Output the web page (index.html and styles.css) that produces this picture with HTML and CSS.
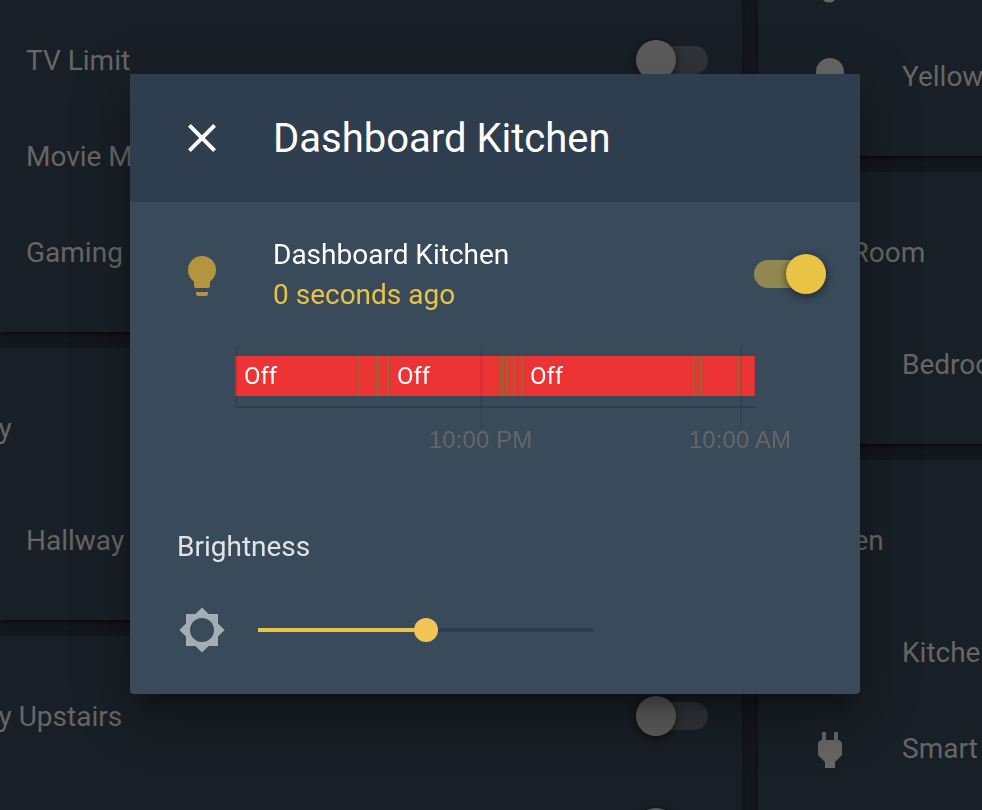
FILE: index.html
```html
<!DOCTYPE html>
<html lang="en">
<head>
<meta charset="utf-8">
<title>Dashboard Kitchen</title>
<link rel="stylesheet" href="styles.css">
</head>
<body>
<main class="board">
  <div class="column left">
    <section class="card">
      <div class="row"><span class="name">TV Limit</span><span class="switch"><i></i></span></div>
      <div class="row"><span class="name">Movie M</span></div>
      <div class="row"><span class="name">Gaming</span></div>
    </section>
    <section class="card">
      <header class="heading"><span>y</span></header>
      <div class="row"><span class="name">Hallway</span></div>
    </section>
    <section class="card">
      <header class="heading"><span>y Upstairs</span><span class="switch"><i></i></span></header>
      <div class="row"><span class="name"></span><span class="switch"><i></i></span></div>
    </section>
  </div>
  <div class="column right">
    <section class="card first">
      <svg class="peek" viewBox="0 0 14 3"><path d="M1 0H13Q11 2.5 7 2.5T1 0Z"/></svg>
      <div class="row"><svg class="icon" viewBox="0 0 24 24"><path d="M12,2A7,7 0 0,0 5,9C5,11.38 6.19,13.47 8,14.74V17A1,1 0 0,0 9,18H15A1,1 0 0,0 16,17V14.74C17.81,13.47 19,11.38 19,9A7,7 0 0,0 12,2Z"/></svg><span class="name">Yellow</span></div>
    </section>
    <section class="card">
      <header class="heading room"><span>Room</span></header>
      <div class="row"><span class="icon"></span><span class="name">Bedroom</span></div>
    </section>
    <section class="card">
      <header class="heading kitchen"><span>en</span></header>
      <div class="row"><span class="icon"></span><span class="name">Kitchen</span></div>
      <div class="row"><svg class="icon" viewBox="0 0 24 24"><path d="M16,7V3H14V7H10V3H8V7C7,7 6,8 6,9V14.5L9.5,18V21H14.5V18L18,14.5V9C18,8 17,7 16,7Z"/></svg><span class="name">Smart</span></div>
    </section>
  </div>
</main>

<div class="dialog" role="dialog">
  <header class="toolbar">
    <svg class="close" viewBox="0 0 24 24"><path d="M19,6.41L17.59,5L12,10.59L6.41,5L5,6.41L10.59,12L5,17.59L6.41,19L12,13.41L17.59,19L19,17.59L13.41,12L19,6.41Z"/></svg>
    <h1>Dashboard Kitchen</h1>
  </header>
  <div class="state">
    <svg class="bulb" viewBox="0 0 24 24"><path d="M12,2A7,7 0 0,0 5,9C5,11.38 6.19,13.47 8,14.74V17A1,1 0 0,0 9,18H15A1,1 0 0,0 16,17V14.74C17.81,13.47 19,11.38 19,9A7,7 0 0,0 12,2M9,21A1,1 0 0,0 10,22H14A1,1 0 0,0 15,21V20H9V21Z"/></svg>
    <div class="info"><div>Dashboard Kitchen</div><div class="ago">0 seconds ago</div></div>
    <span class="switch on"><i></i></span>
  </div>
  <svg class="history" viewBox="0 0 600 120">
    <rect class="off" x="5.5" y="16" width="519.3" height="40"/>
    <g class="change">
      <rect x="127.3" y="16" width="2.6" height="40"/>
      <rect x="146" y="16" width="2.6" height="40"/>
      <rect x="157.2" y="16" width="2" height="40"/>
      <rect class="soft" x="159.2" y="16" width="2" height="40"/>
      <rect x="269.4" y="16" width="4" height="40"/>
      <rect x="275.4" y="16" width="3.2" height="40"/>
      <rect x="283.2" y="16" width="2.4" height="40"/>
      <rect x="291.2" y="16" width="2.4" height="40"/>
      <rect x="463.2" y="16" width="2.2" height="40"/>
      <rect x="470" y="16" width="2.2" height="40"/>
      <rect class="soft" x="472.2" y="16" width="1.6" height="40"/>
      <rect x="508" y="16" width="2.4" height="40"/>
    </g>
    <g class="grid">
      <rect x="5.5" y="6" width="2" height="60"/>
      <rect x="250.5" y="6" width="2" height="82"/>
      <rect x="510" y="6" width="2" height="82"/>
      <rect class="axis" x="5.5" y="66" width="521" height="2"/>
    </g>
    <g class="value"><text x="14" y="44">Off</text><text x="167" y="44">Off</text><text x="300" y="44">Off</text></g>
    <g class="tick"><text x="250.7" y="108">10:00 PM</text><text x="510" y="108">10:00 AM</text></g>
  </svg>
  <div class="label">Brightness</div>
  <div class="brightness">
    <svg class="sun" viewBox="0 0 24 24"><path d="M12,18A6,6 0 0,1 6,12A6,6 0 0,1 12,6A6,6 0 0,1 18,12A6,6 0 0,1 12,18M20,15.31L23.31,12L20,8.69V4H15.31L12,0.69L8.69,4H4V8.69L0.69,12L4,15.31V20H8.69L12,23.31L15.31,20H20V15.31Z"/></svg>
    <div class="slider"><div class="filled"></div><div class="knob"></div><div class="rest"></div></div>
  </div>
</div>
</body>
</html>
```
FILE: styles.css
```css
* { box-sizing: border-box; }
body {
  margin: 0;
  width: 982px;
  height: 810px;
  overflow: hidden;
  background: #14181f;
  color: #666;
  font: 28px/40px Roboto, sans-serif;
}
svg { display: block; fill: currentColor; flex: none; }

.board {
  display: grid;
  grid-template-columns: 742px 400px;
  gap: 16px;
  height: 810px;
  overflow: hidden;
}
.column { display: flex; flex-direction: column; gap: 16px; }
.card {
  flex: none;
  padding-bottom: 32px;
  background: #181f26;
  box-shadow: 0 4px 4px rgba(0,0,0,.2), 0 2px 10px rgba(0,0,0,.15), 0 6px 2px -4px rgba(0,0,0,.3);
}
.left .card:first-child { padding-top: 12px; }
.row { display: flex; align-items: center; height: 96px; }
.name { flex: 1; padding-top: 2px; white-space: nowrap; }
.left .row { padding: 0 34px 0 26px; }
.right .row { padding-left: 48px; }
.icon { width: 48px; height: 48px; margin: 4px 48px 0 0; }
.heading {
  display: flex;
  align-items: center;
  justify-content: space-between;
  height: 144px;
  padding: 16px 34px 0 0;
}
.heading span:first-child { padding-top: 2px; text-indent: -1.5px; }
.heading.room { padding-left: 95px; }
.heading.kitchen { padding-left: 97px; }
.first { height: 156px; }
.peek { width: 14px; height: 3px; margin: 0 0 25px 64px; }

.switch {
  display: flex;
  align-items: center;
  width: 72px;
  height: 28px;
  border-radius: 14px;
  background: #303338;
}
.switch i {
  width: 40px;
  height: 40px;
  border-radius: 50%;
  background: #5c5c5c;
  box-shadow: 0 2px 8px rgba(0,0,0,.55);
}
.switch.on { justify-content: flex-end; background: #908850; }
.switch.on i { background: #e9c345; }

.dialog {
  position: fixed;
  left: 130px;
  top: 74px;
  width: 730px;
  height: 620px;
  border-radius: 0 0 4px 4px;
  background: #394a5b;
  color: #fff;
  box-shadow: 0 32px 48px 4px rgba(0,0,0,.14), 0 12px 60px 10px rgba(0,0,0,.12), 0 16px 20px -10px rgba(0,0,0,.4);
}
.toolbar {
  display: flex;
  align-items: center;
  gap: 47px;
  height: 128px;
  padding-left: 48px;
  background: #2f3e4e;
}
.close { width: 48px; height: 48px; }
h1 { margin: 0; padding-top: 2px; font-size: 40px; font-weight: 400; }
.state {
  display: flex;
  align-items: center;
  height: 80px;
  margin: 32px 34px 0 48px;
}
.bulb { width: 48px; height: 48px; margin-top: 4px; color: #b4943f; }
.info { flex: 1; margin-left: 47px; padding-top: 2px; }
.ago { color: #e9c345; }

.history { width: 600px; height: 120px; margin: 26px 0 0 100px; }
.off { fill: #ec3435; }
.change { fill: #a06030; }
.soft { opacity: .4; }
.grid { fill: rgba(0,0,0,.09); }
.axis { fill: rgba(0,0,0,.13); }
.value { fill: #fff; font-size: 24px; }
.tick { fill: #666; font: 24px "Liberation Sans", sans-serif; letter-spacing: .1px; text-anchor: middle; }

.label { margin: 67px 0 0 47px; color: #e1e4e6; }
.brightness { display: flex; align-items: center; margin: 39px 0 0 48px; }
.sun { width: 48px; height: 48px; color: #a4adb5; }
.slider { display: flex; align-items: center; width: 336px; margin-left: 32px; }
.filled { width: 156px; height: 4px; background: #e9c345; }
.knob { width: 24px; height: 24px; border-radius: 50%; background: #f2c655; }
.rest { flex: 1; height: 4px; background: #2f3e4e; }
```
